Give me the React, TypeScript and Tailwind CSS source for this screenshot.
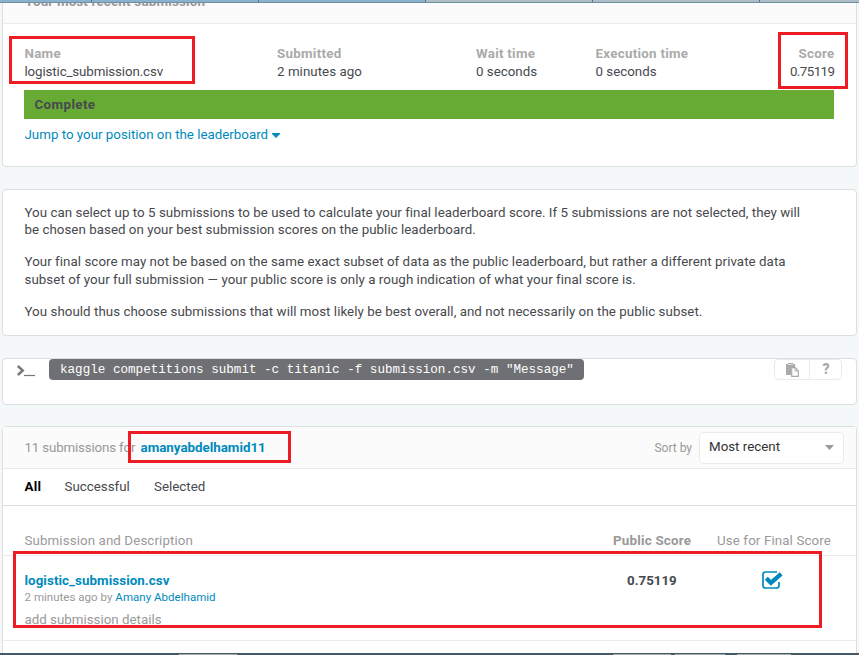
import type { ReactNode } from "react";

function Panel({ className = "", children }: { className?: string; children: ReactNode }) {
  return (
    <section className={`ml-[2px] w-[855px] shrink-0 border border-[#dadfe1] bg-white ${className}`}>{children}</section>
  );
}

function Field({ label, value, className = "", valueClass = "" }: { label: string; value: string; className?: string; valueClass?: string }) {
  return (
    <div className={`leading-[18px] ${className}`}>
      <div className="font-bold tracking-[0.28px] text-[#aaa]">{label}</div>
      <div className={`text-[#47494d] ${valueClass}`}>{value}</div>
    </div>
  );
}

function Highlight({ className }: { className: string }) {
  return <div className={`pointer-events-none absolute border-[3px] border-[#ed1c24] ${className}`} />;
}

function RecentSubmission() {
  return (
    <Panel className="h-[164px] rounded-b border-t-0">
      <div className="h-[21px] overflow-hidden border-b border-[#ebebeb] bg-[#fbfbfb] pl-[22px]">
        <div className="-mt-[10px] font-bold leading-[18px] tracking-[0.18px] text-[#999]">Your most recent submission</div>
      </div>
      <div className="flex pl-[21.5px] pr-[21.5px] pt-[21px]">
        <Field label="Name" value="logistic_submission.csv" className="w-[252.500px]" valueClass="tracking-[-0.13px]" />
        <Field label="Submitted" value="2 minutes ago" className="w-[199px]" valueClass="tracking-[0.04px]" />
        <Field label="Wait time" value="0 seconds" className="w-[119.500px]" />
        <Field label="Execution time" value="0 seconds" className="w-[120px]" />
        <Field label="Score" value="0.75119" className="flex-1 text-right" valueClass="tracking-[-0.55px]" />
      </div>
      <div className="ml-[21px] mt-[9px] flex h-[29px] w-[810px] items-center bg-[#67ab35] pl-[10.500px] font-bold tracking-[0.4px] text-[#47494d]">
        Complete
      </div>
      <a className="ml-[21.500px] mt-[7px] flex items-center gap-1 leading-[18px] text-[#008abc]">
        Jump to your position on the leaderboard
        <svg width="8" height="5" viewBox="0 0 8 5"><path d="M0 0h8v1L4 5 0 1z" fill="currentColor" /></svg>
      </a>
    </Panel>
  );
}

function Rules() {
  return (
    <Panel className="mt-[22px] h-[147px] whitespace-nowrap rounded pl-[21.500px] pt-[13.5px] leading-[17.5px] tracking-[0.03px] text-[#47494d]">
      <p className="mb-[14.5px]">
        You can select up to 5 submissions to be used to calculate your final leaderboard score. If 5 submissions are not selected, they will
        <br />
        be chosen based on your best submission scores on the public leaderboard.
      </p>
      <p className="mb-[14.5px] tracking-[0.05px]">
        Your final score may not be based on the same exact subset of data as the public leaderboard, but rather a different private data
        <br />
        subset of your full submission — your public score is only a rough indication of what your final score is.
      </p>
      <p className="tracking-[0.04px]">You should thus choose submissions that will most likely be best overall, and not necessarily on the public subset.</p>
    </Panel>
  );
}

function Command() {
  return (
    <Panel className="mt-[22px] flex h-[47px] items-start rounded">
      <svg className="ml-[14px] mt-[6px]" width="19" height="13" viewBox="0 0 19 13" fill="none" stroke="#77787b">
        <path d="M.8 1l5 4.500L.8 10" strokeWidth="2.400" />
        <path d="M7 10.500h11" strokeWidth="1.200" />
      </svg>
      <code className="ml-[13px] h-[21px] w-[535px] whitespace-pre rounded bg-[#6f7073] pl-[11px] font-['Liberation_Mono','Courier_New',monospace] text-[12.6px] leading-[22px] text-white">
        {'kaggle competitions submit -c titanic -f submission.csv -m "Message"'}
      </code>
      <div className="ml-auto mr-[14px] flex h-[21px] w-[68px] rounded border border-[#ebebeb] text-[#aaa]">
        <div className="flex w-[35px] items-center justify-center border-r border-[#ebebeb]">
          <svg width="13" height="14" viewBox="0 0 13 14">
            <path d="M0 1h2V0h5v1h2v3H5v8H0z" fill="#aaa" />
            <path d="M2 1.500h5" stroke="#ddd" />
            <path d="M5.700 4.700h3.600l3 3v5.600H5.700z" fill="white" stroke="#aaa" strokeWidth="1.200" />
            <path d="M9 4.700V8h3.300" fill="none" stroke="#aaa" />
          </svg>
        </div>
        <div className="flex flex-1 items-center justify-center pl-px text-[14px] font-black">?</div>
      </div>
    </Panel>
  );
}

function Submissions() {
  return (
    <Panel className="mt-[21px] h-[240px] rounded-t">
      <div className="flex h-[42px] items-center border-b border-[#ebebeb] bg-[#fbfbfb] pl-[21.500px] pr-[12px] text-[#999]">
        <span className="w-[111px] whitespace-nowrap tracking-[-0.17px]">11 submissions for</span>
        <a className="ml-[5px] font-bold text-[#008abc]">amanyabdelhamid11</a>
        <span className="ml-auto text-[12px]">Sort by</span>
        <div className="ml-[7px] flex h-[32px] w-[145px] items-center justify-between rounded border border-[#ebebeb] bg-white pb-[2px] pl-[9px] pr-[9px] text-[#333]">
          Most recent
          <svg className="mt-[2px]" width="9" height="5" viewBox="0 0 9 5"><path d="M0 0h9L4.500 5z" fill="#999" /></svg>
        </div>
      </div>
      <nav className="flex h-[37px] items-center border-b border-[#dedfe0] pl-[21.500px] text-[#47494d]">
        <span className="w-[40px] font-bold tracking-[0.2px] text-black">All</span>
        <span className="w-[89.500px]">Successful</span>
        <span>Selected</span>
      </nav>
      <div className="flex h-[50px] items-end border-b border-[#ebebeb] pb-[5px] pl-[21.500px] leading-[18px] text-[#999]">
        <span className="w-[588.500px] tracking-[0.1px]">Submission and Description</span>
        <span className="w-[104px] font-bold tracking-[0.22px]">Public Score</span>
        <span className="tracking-[0.12px]">Use for Final Score</span>
      </div>
      <div className="flex h-[85px] border-b border-[#ebebeb] pl-[21.500px] pt-[16px]">
        <div className="w-[602.500px] text-[#999]">
          <div className="font-bold leading-[18px] tracking-[0.07px] text-[#008abc]">logistic_submission.csv</div>
          <div className="-mt-px text-[11.5px] leading-[16px] tracking-[0.03px]">
            2 minutes ago by <span className="text-[#008abc]">Amany Abdelhamid</span>
          </div>
          <div className="mt-[6px] leading-[18px]">add submission details</div>
        </div>
        <div className="w-[135px] font-bold leading-[18px] text-[#47494d]">0.75119</div>
        <svg className="-mt-px" width="21" height="19" viewBox="0 0 21 19" fill="none" stroke="#008abc">
          <path d="M15 1H3.500Q1 1 1 3.500v11Q1 17 3.500 17h11Q17 17 17 14.500V11" strokeWidth="1.700" />
          <path d="M4.300 7.300l4.600 4.500L19.200 2.800" strokeWidth="4.300" />
        </svg>
      </div>
    </Panel>
  );
}

export default function App() {
  return (
    <div className="relative flex h-[655px] w-[859px] flex-col overflow-hidden bg-[#f5f8f9] font-['Roboto','Liberation_Sans',sans-serif] text-[13.33px]">
      <div className="flex h-[3px] shrink-0 border-b border-[#708fa3] bg-[#afbdc6]">
        <div className="w-[92px] border-r border-[#52738a] bg-[#8ab1cd]" />
        <div className="w-[167px] border-r border-[#52738a] bg-[#8ab1cd]" />
        <div className="w-[167px] border-r border-[#52738a] bg-[#8ab1cd]" />
        <div className="w-[167px] border-r border-[#52738a]" />
        <div className="w-[167px] border-r border-[#52738a]" />
      </div>
      <RecentSubmission />
      <Rules />
      <Command />
      <Submissions />
      <Highlight className="left-[9px] top-[36px] h-[48px] w-[186px]" />
      <Highlight className="left-[778px] top-[32px] h-[57px] w-[70px]" />
      <Highlight className="left-[128px] top-[431px] h-[32px] w-[163px]" />
      <Highlight className="left-[13px] top-[551px] h-[77px] w-[809px]" />
      <div className="absolute inset-x-0 bottom-0 flex h-[2px] bg-[#465966]">
        <div className="ml-[179px] mt-px w-[58px] bg-[#a5adb2]" />
        <div className="ml-[376px] mt-px w-[58px] bg-[#a5adb2]" />
        <div className="ml-[4px] mt-px w-[50px] bg-[#a5adb2]" />
        <div className="ml-[12px] mt-px w-[54px] bg-[#a5adb2]" />
      </div>
    </div>
  );
}
